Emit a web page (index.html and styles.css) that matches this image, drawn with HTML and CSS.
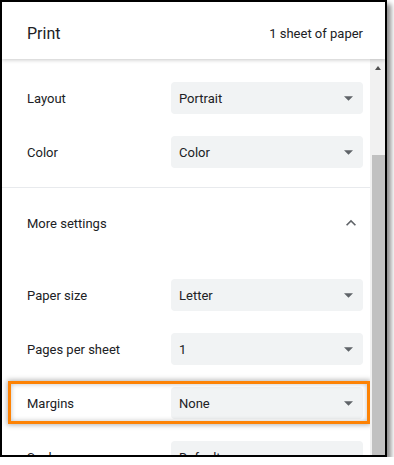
FILE: index.html
```html
<!DOCTYPE html>
<html lang="en">

<head>
    <meta charset="UTF-8">
    <title>Print</title>
    <link rel="stylesheet" href="styles.css">
</head>

<body>

    <div class="dialog">
        <div class="header">
            <h1 class="title">Print</h1>
            <span class="summary">1 sheet of paper</span>
        </div>

        <div class="body">
            <div class="settings">
                <div class="section">
                    <div class="row">
                        <span class="label">Layout</span>
                        <div class="select">Portrait<svg class="caret" viewBox="0 0 10 5"><polygon points="0,0 10,0 5,5"/></svg></div>
                    </div>
                    <div class="row">
                        <span class="label">Color</span>
                        <div class="select">Color<svg class="caret" viewBox="0 0 10 5"><polygon points="0,0 10,0 5,5"/></svg></div>
                    </div>
                </div>

                <div class="more">
                    <span class="label">More settings</span>
                    <svg class="chevron" viewBox="0 0 24 24"><path d="M12 8l-6 6 1.41 1.41L12 10.83l4.59 4.58L18 14z"/></svg>
                </div>

                <div class="section extra">
                    <div class="row">
                        <span class="label">Paper size</span>
                        <div class="select">Letter<svg class="caret" viewBox="0 0 10 5"><polygon points="0,0 10,0 5,5"/></svg></div>
                    </div>
                    <div class="row">
                        <span class="label">Pages per sheet</span>
                        <div class="select">1<svg class="caret" viewBox="0 0 10 5"><polygon points="0,0 10,0 5,5"/></svg></div>
                    </div>
                    <div class="row highlight">
                        <span class="label">Margins</span>
                        <div class="select">None<svg class="caret" viewBox="0 0 10 5"><polygon points="0,0 10,0 5,5"/></svg></div>
                        <div class="marker"></div>
                    </div>
                    <div class="row">
                        <span class="label">Scale</span>
                        <div class="select">Default<svg class="caret" viewBox="0 0 10 5"><polygon points="0,0 10,0 5,5"/></svg></div>
                    </div>
                </div>
            </div>

            <div class="scrollbar">
                <div class="scroll-up"><span class="arrow"></span></div>
                <div class="thumb"></div>
            </div>
        </div>
    </div>

</body>

</html>
```

FILE: styles.css
```css
body {
    font-family: Roboto, 'Liberation Sans', sans-serif;
    margin: 0;
    background-color: #fff;
    color: #202124;
}

.dialog {
    width: 383px;
    height: 453px;
    border: 2px solid #000;
    box-shadow: 4px 4px 5px rgba(0, 0, 0, 0.45);
    display: flex;
    flex-direction: column;
    overflow: hidden;
    background-color: #fff;
}

.header {
    height: 57px;
    box-sizing: border-box;
    flex-shrink: 0;
    display: flex;
    align-items: center;
    justify-content: space-between;
    padding: 6px 22px 0 25px;
    box-shadow: 0 1px 4px rgba(0, 0, 0, 0.22);
    position: relative;
    z-index: 1;
}

.title {
    font-size: 16px;
    font-weight: 400;
    margin: 0;
}

.summary {
    font-size: 13px;
}

.body {
    flex: 1;
    display: flex;
    overflow: hidden;
}

.settings {
    flex: 1;
    overflow: hidden;
    padding-top: 12px;
}

.section {
    padding-bottom: 8px;
    border-bottom: 1px solid #e8eaed;
}

.section.extra {
    border-bottom: none;
    padding-top: 10px;
}

.row {
    height: 54px;
    display: flex;
    align-items: center;
    padding: 0 7px 0 25px;
}

.label {
    font-size: 13px;
    width: 144px;
    flex-shrink: 0;
}

.select {
    flex: 1;
    height: 32px;
    box-sizing: border-box;
    background-color: #f1f3f4;
    border-radius: 4px;
    display: flex;
    align-items: center;
    justify-content: space-between;
    padding: 0 10px 0 8px;
    font-size: 13px;
}

.caret {
    width: 9px;
    height: 5px;
    fill: #5f6368;
}

.more {
    height: 70px;
    display: flex;
    align-items: center;
    justify-content: space-between;
    padding: 0 9px 0 25px;
}

.chevron {
    width: 20px;
    height: 20px;
    fill: #5f6368;
}

.highlight {
    position: relative;
}

.marker {
    position: absolute;
    top: 5px;
    bottom: 6px;
    left: 6px;
    right: 0;
    border: 3px solid #fd8204;
    box-shadow: 0 0 5px 1px rgba(0, 0, 0, 0.3), inset 0 0 5px rgba(0, 0, 0, 0.25);
}

.scrollbar {
    width: 15px;
    flex-shrink: 0;
    background-color: #f1f1f1;
    display: flex;
    flex-direction: column;
}

.scroll-up {
    height: 17px;
    display: flex;
    justify-content: center;
    align-items: center;
}

.arrow {
    width: 0;
    height: 0;
    border-left: 3.5px solid transparent;
    border-right: 3.5px solid transparent;
    border-bottom: 4px solid #505050;
}

.thumb {
    margin: 79px 0 0 2px;
    flex: 1;
    background-color: #c1c1c1;
}
```
